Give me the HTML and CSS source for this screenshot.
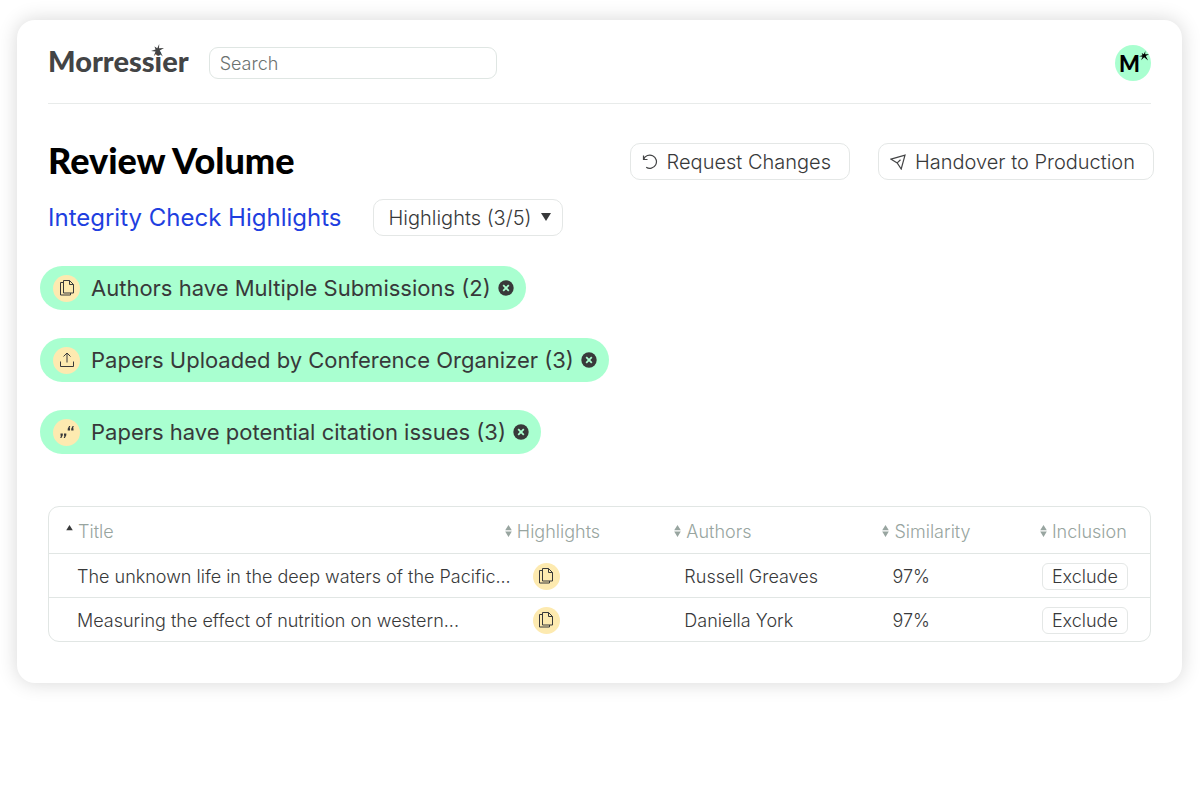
FILE: index.html
```html
<!DOCTYPE html>
<html lang="en">
<head>
    <meta charset="UTF-8">
    <meta name="viewport" content="width=device-width, initial-scale=1.0">
    <title>Review Volume - Morressier</title>
    <link rel="stylesheet" href="styles.css">
</head>
<body>
    <!-- Shared icons -->
    <svg class="icon-defs" aria-hidden="true">
        <symbol id="star" viewBox="0 0 12 12">
            <path d="M7.6 0 L7.4 4 L12 3.8 L8.1 6 L10.9 11.5 L6.2 7.6 L2.5 11.2 L4.2 7 L0 6.4 L4.2 5 L3.2 2.4 L5.800 3.900 Z"/>
        </symbol>
        <symbol id="pages" viewBox="0 0 16 16">
            <path d="M4.5 .5h6l4 4v8.5h-10z M10.5 .5v4h4 M4.5 2.5h-3v12.5h10v-2" fill="none" stroke="currentColor"/>
        </symbol>
        <symbol id="close" viewBox="0 0 16 16">
            <circle cx="8" cy="8" r="7.7" fill="currentColor"/>
            <path d="M5.2 5.2l5.6 5.6M10.8 5.2l-5.6 5.6" stroke="#a9ffd0" stroke-width="1.8"/>
        </symbol>
        <symbol id="sort" viewBox="0 0 7 12">
            <path d="M3.5 0L6.8 5.2H.2zM.2 6.5h6.6L3.5 12z" fill="currentColor"/>
        </symbol>
    </svg>

    <main class="card">
        <header class="topbar">
            <a class="logo" href="#">Morressier<svg class="logo-star"><use href="#star"/></svg></a>
            <input class="search" type="search" placeholder="Search" aria-label="Search">
            <a class="avatar" href="#" aria-label="Account">M<svg class="avatar-star"><use href="#star"/></svg></a>
        </header>

        <div class="title-row">
            <h1>Review Volume</h1>
            <div class="actions">
                <button class="btn" type="button">
                    <svg class="btn-icon" viewBox="0 0 16 16"><path d="M1.5 1.5v4h4M1.7 5.3A6.6 6.6 0 1 1 4.2 13.2"/></svg>
                    Request Changes
                </button>
                <button class="btn" type="button">
                    <svg class="btn-icon" viewBox="0 0 16 16"><path d="M1 5.2L15 1.2 11.2 15 7.2 8.9zM7.2 8.9L10.5 5.8"/></svg>
                    Handover to Production
                </button>
            </div>
        </div>

        <div class="filter-row">
            <h2>Integrity Check Highlights</h2>
            <div class="dropdown">
                <select aria-label="Highlights filter">
                    <option>Highlights (3/5)</option>
                </select>
                <svg class="caret" viewBox="0 0 10 8"><path d="M0 0h10L5 8z"/></svg>
            </div>
        </div>

        <ul class="chips">
            <li class="chip">
                <span class="badge"><svg class="badge-icon"><use href="#pages"/></svg></span>
                Authors have Multiple Submissions (2)
                <button class="remove" type="button" aria-label="Remove"><svg><use href="#close"/></svg></button>
            </li>
            <li class="chip">
                <span class="badge"><svg class="badge-icon" viewBox="0 0 16 16"><path d="M1.5 9.5v5h13v-5M8 10.5V1M4.5 4.5L8 1l3.5 3.5" fill="none" stroke="currentColor"/></svg></span>
                Papers Uploaded by Conference Organizer (3)
                <button class="remove" type="button" aria-label="Remove"><svg><use href="#close"/></svg></button>
            </li>
            <li class="chip">
                <span class="badge"><svg class="badge-icon" viewBox="0 0 16 16">
                    <path d="M1.5 9.500h2.300v1.700L2.400 14H1.200l.8-2.200h-.5zM5 9.500h2.300v1.700L5.900 14H4.700l.8-2.200H5zM11 6.500H8.700V4.800L10.100 2h1.200l-.8 2.200h.5zM14.500 6.500h-2.300V4.800L13.600 2h1.200L14 4.200h.5z" fill="currentColor"/></svg></span>
                Papers have potential citation issues (3)
                <button class="remove" type="button" aria-label="Remove"><svg><use href="#close"/></svg></button>
            </li>
        </ul>

        <div class="table-wrap">
            <table>
                <thead>
                    <tr>
                        <th class="col-title"><button class="sort" type="button"><svg class="sort-up" viewBox="0 0 7 12"><path d="M3.5 0L6.8 5.2H.2z" fill="currentColor"/></svg>Title</button></th>
                        <th class="col-highlights"><button class="sort" type="button"><svg><use href="#sort"/></svg>Highlights</button></th>
                        <th class="col-authors"><button class="sort" type="button"><svg><use href="#sort"/></svg>Authors</button></th>
                        <th class="col-similarity"><button class="sort" type="button"><svg><use href="#sort"/></svg>Similarity</button></th>
                        <th class="col-inclusion"><button class="sort" type="button"><svg><use href="#sort"/></svg>Inclusion</button></th>
                    </tr>
                </thead>
                <tbody>
                    <tr>
                        <td class="col-title">The unknown life in the deep waters of the Pacific...</td>
                        <td class="col-highlights"><span class="badge"><svg class="badge-icon"><use href="#pages"/></svg></span></td>
                        <td>Russell Greaves</td>
                        <td>97%</td>
                        <td class="col-inclusion"><button class="exclude" type="button">Exclude</button></td>
                    </tr>
                    <tr>
                        <td class="col-title">Measuring the effect of nutrition on western...</td>
                        <td class="col-highlights"><span class="badge"><svg class="badge-icon"><use href="#pages"/></svg></span></td>
                        <td>Daniella York</td>
                        <td>97%</td>
                        <td class="col-inclusion"><button class="exclude" type="button">Exclude</button></td>
                    </tr>
                </tbody>
            </table>
        </div>
    </main>
</body>
</html>
```
FILE: styles.css
```css
* {
    box-sizing: border-box;
}

body {
    margin: 0;
    padding: 20px 18px 20px 17px;
    background-color: #fff;
    color: #38393a;
    font-family: 'Inter', sans-serif;
    font-size: 18px;
    font-weight: 300;
}

button,
input,
select {
    font: inherit;
    color: inherit;
}

button {
    cursor: pointer;
}

h1,
h2 {
    margin: 0;
}

.icon-defs {
    display: none;
}

.card {
    padding: 25px 31px 41px;
    border-radius: 18px;
    background-color: #fff;
    box-shadow: 0 0 20px rgba(0, 0, 0, 0.16);
}

/* Top bar */
.topbar {
    display: flex;
    align-items: center;
    padding-bottom: 22px;
    border-bottom: 1px solid #e8ebea;
}

.logo {
    position: relative;
    padding-bottom: 4px;
    color: #434445;
    font-family: 'Lato', sans-serif;
    font-size: 29px;
    font-weight: 900;
    line-height: 32px;
    text-decoration: none;
}

.logo-star {
    position: absolute;
    top: -1px;
    right: 25px;
    width: 13px;
    height: 13px;
    fill: #434445;
}

.search {
    width: 288px;
    height: 32px;
    margin-left: 20px;
    padding: 0 10px;
    border: 1px solid #dfe6e3;
    border-radius: 9px;
    background-color: #fff;
    appearance: none;
}

.search::placeholder {
    color: #6c7270;
    opacity: 1;
}

.avatar {
    position: relative;
    width: 36px;
    height: 36px;
    margin-left: auto;
    padding-left: 4px;
    border-radius: 50%;
    background-color: #a9ffd0;
    color: #000;
    font-family: 'Lato', sans-serif;
    font-size: 22px;
    font-weight: 900;
    line-height: 38px;
    text-decoration: none;
}

.avatar-star {
    position: absolute;
    top: 6px;
    right: 2px;
    width: 10px;
    height: 10px;
}

/* Title and actions */
.title-row {
    display: flex;
    align-items: center;
    justify-content: space-between;
    margin: 39px -3px 19px 0;
}

h1 {
    padding-bottom: 4px;
    color: #000;
    font-family: 'Lato', sans-serif;
    font-size: 36px;
    font-weight: 900;
    line-height: 32px;
}

.actions {
    display: flex;
    gap: 28px;
}

.btn {
    display: flex;
    align-items: center;
    gap: 9px;
    height: 37px;
    padding: 0 18px 0 11px;
    border: 1px solid #e4e7e6;
    border-radius: 10px;
    background-color: #fff;
    font-size: 20px;
}

.btn-icon {
    width: 16px;
    height: 16px;
    fill: none;
    stroke: #434445;
    stroke-width: 1.2;
}

.filter-row {
    display: flex;
    align-items: center;
    gap: 32px;
    margin-bottom: 30px;
}

h2 {
    color: #1f3fe0;
    font-size: 24px;
    font-weight: 400;
}

.dropdown {
    position: relative;
}

.dropdown select {
    height: 37px;
    padding: 0 30px 0 14px;
    border: 1px solid #e4e7e6;
    border-radius: 10px;
    background-color: #fff;
    font-size: 20px;
    appearance: none;
}

.caret {
    position: absolute;
    top: 14px;
    right: 12px;
    width: 10px;
    height: 8px;
    fill: #38393a;
    pointer-events: none;
}

/* Highlight chips */
.chips {
    display: flex;
    flex-direction: column;
    align-items: flex-start;
    gap: 28px;
    margin: 0 0 52px -8px;
    padding: 0;
    list-style: none;
}

.chip {
    display: flex;
    align-items: center;
    height: 44px;
    padding: 0 12px 0 13px;
    border-radius: 22px;
    background-color: #a9ffd0;
    font-size: 22px;
    font-weight: 400;
}

.badge {
    display: flex;
    align-items: center;
    justify-content: center;
    width: 27px;
    height: 27px;
    border-radius: 50%;
    background-color: #fdeab0;
}

.badge-icon {
    width: 16px;
    height: 16px;
}

.chip .badge {
    margin-right: 11px;
}

.remove {
    display: flex;
    margin-left: 7px;
    padding: 0;
    border: none;
    background: none;
}

.remove svg {
    width: 16px;
    height: 16px;
}

/* Papers table */
.table-wrap {
    border: 1px solid #e1e6e4;
    border-radius: 11px;
}

table {
    width: 100%;
    border-collapse: collapse;
    table-layout: fixed;
}

th,
td {
    height: 44px;
    padding: 2px 0 0 10px;
    text-align: left;
    white-space: nowrap;
}

th {
    height: 46px;
    padding: 3px 0 0;
    color: #98a5a0;
    font-weight: 300;
}

tbody tr {
    border-top: 1px solid #e1e6e4;
}

th.col-title {
    width: 41.4%;
    padding-left: 17px;
}

th.col-highlights {
    width: 15.4%;
}

th.col-authors {
    width: 18.9%;
}

th.col-similarity {
    width: 14.3%;
}

td.col-title {
    padding-left: 28px;
}

td.col-highlights {
    padding-left: 28px;
}

td.col-inclusion {
    padding-left: 2px;
}

.sort {
    display: flex;
    align-items: center;
    gap: 5px;
    padding: 0;
    border: none;
    background: none;
}

.sort svg {
    width: 7px;
    height: 12px;
}

.sort .sort-up {
    color: #38393a;
}

.exclude {
    display: block;
    height: 27px;
    padding: 0 9px;
    border: 1px solid #e4e7e6;
    border-radius: 6px;
    background-color: #fff;
}
```
